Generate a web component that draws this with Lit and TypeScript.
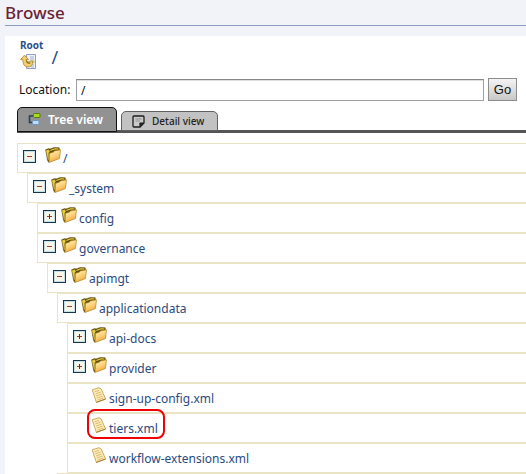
import { LitElement, html, css, svg, nothing, TemplateResult } from "lit";
import { customElement, state } from "lit/decorators.js";
import { classMap } from "lit/directives/class-map.js";

interface Entry {
  name: string;
  kind: "folder" | "file";
  open?: boolean;
  marked?: boolean;
  children?: Entry[];
}

const registry: Entry = {
  name: "/", kind: "folder", open: true, children: [
    { name: "_system", kind: "folder", open: true, children: [
      { name: "config", kind: "folder" },
      { name: "governance", kind: "folder", open: true, children: [
        { name: "apimgt", kind: "folder", open: true, children: [
          { name: "applicationdata", kind: "folder", open: true, children: [
            { name: "api-docs", kind: "folder" },
            { name: "provider", kind: "folder" },
            { name: "sign-up-config.xml", kind: "file" },
            { name: "tiers.xml", kind: "file", marked: true },
            { name: "workflow-extensions.xml", kind: "file" },
          ] },
        ] },
      ] },
    ] },
  ],
};

const folderIcon = html`<svg class="icon" viewBox="0 0 16 16" aria-hidden="true">
  <defs><linearGradient id="face" x1="0.2" y1="0" x2="0.6" y2="1">
    <stop offset="0" stop-color="#fff3b8"/><stop offset="0.5" stop-color="#fbd07a"/><stop offset="1" stop-color="#f0a030"/>
  </linearGradient></defs>
  <path d="M0.6 2.8 L3.6 1.6 L5 2 L9.4 0.4 L14.2 0.8 L14.6 4 L5 7 L3.8 15.4 L2.6 13.6 Z" fill="#5c4a12" stroke="#6e5814" stroke-width="0.6"/>
  <path d="M1 3.6 L3.8 2.6 L4.8 4.4 L3.6 6 L3.8 13.4 L2.9 12 Z" fill="#e9cf3c"/>
  <path d="M5.4 3.4 L10 1.7 L13.4 2" stroke="#f0d840" stroke-width="1.1" fill="none"/>
  <path d="M4.4 6.4 L8.2 5.2 L9.4 4 L15.5 2.8 L14.4 11.6 L4.2 15.4 Z" fill="url(#face)" stroke="#b5811c" stroke-width="0.7"/>
</svg>`;

const fileIcon = html`<svg class="icon" viewBox="0 0 16 16" aria-hidden="true">
  <path d="M1.2 2.8 L8 0.7 L10.2 2 L14.6 12 L5.4 15.4 Z" fill="#fdeebc" stroke="#c8a050" stroke-width="0.9"/>
  <path d="M5.4 15.4 L14.6 12" stroke="#a87c30" stroke-width="1"/>
  <path d="M3.6 4.8 L8.2 3.3 M4.3 6.9 L9.8 5.1 M5 9 L10.8 7.1 M5.7 11.1 L11.6 9.1 M6.4 13.1 L12.4 11" stroke="#d6ab62" stroke-width="0.8"/>
</svg>`;

const rootIcon = html`<svg class="icon" viewBox="0 0 16 16" aria-hidden="true">
  <path d="M6.5 0.5 H15.5 V14.5 H6.5 Z" fill="#eef1fa" stroke="#8f9cc4"/>
  <path d="M10 3 H14 M10 5 H14 M11 11 H14 M11 13 H14" stroke="#a4afd0" stroke-width="1"/>
  <path d="M11 6.5 H14.5 V9 H11 Z" fill="#b9cf7c"/>
  <path d="M4.5 1.2 L8.6 5.6 H6.2 C6.2 7.2 6.8 8.2 8.2 8 C9.6 7.8 10.2 6.6 12.6 6.9 C13.4 10.2 11.4 12.9 8 12.9 C4.6 12.9 2.7 10.3 2.9 5.6 H0.5 Z" fill="#f0cf6e" stroke="#b48c34" stroke-width="0.9"/>
  <path d="M6.6 6.6 C6.6 8.6 8 9.4 10.4 9" stroke="#7c5a1c" stroke-width="1.1" fill="none"/>
</svg>`;

const treeIcon = html`<svg class="tab-icon" viewBox="0 0 13 13" aria-hidden="true">
  <path d="M5 3 H1.5 V9.5 H4" fill="none" stroke="#2c4250" stroke-width="1.6"/>
  <rect x="5.5" y="0.5" width="6.5" height="4" rx="1" fill="#a8dc1c" stroke="#4e7d0c"/>
  <rect x="4.5" y="7.5" width="6.5" height="4" rx="1.2" fill="#c0dcfa" stroke="#6b96c4"/>
</svg>`;

const detailIcon = html`<svg class="tab-icon" viewBox="0 0 13 13" aria-hidden="true">
  <path d="M2 1 H11 Q12 1 12 2 V8 L8 12 H2 Q1 12 1 11 V2 Q1 1 2 1 Z" fill="#c9c9c9" stroke="#1c1c1c" stroke-width="1.3"/>
  <path d="M12 7.4 L7.4 12 V8.4 Q7.4 7.4 8.4 7.4 Z" fill="#1c1c1c"/>
  <path d="M3.5 4 H9.5 M3.5 6 H8" stroke="#909090"/>
</svg>`;

@customElement("registry-tree")
export class RegistryTree extends LitElement {
  static styles = css`
    :host { display: block; }
    ul { list-style: none; margin: 0; padding: 0; }
    ul ul { margin-left: 10px; }
    .row {
      display: flex;
      align-items: flex-start;
      box-sizing: border-box;
      height: 30px;
      padding: 3px 0 0 5px;
      border: 1px solid #e8e4c4;
      border-right: 0;
      white-space: nowrap;
    }
    .toggle, .spacer { flex: none; width: 13px; height: 13px; margin: 3px 5px 0 0; }
    .top .toggle { margin-right: 9px; }
    .toggle {
      display: block;
      padding: 0;
      border: 0;
      background: none;
      cursor: pointer;
    }
    .toggle svg { display: block; width: 13px; height: 13px; }
    .entry {
      position: relative;
      display: flex;
      color: #2b4a80;
      text-decoration: none;
      line-height: 16px;
    }
    .icon { flex: none; width: 16px; height: 16px; margin-right: 2px; }
    .name { padding-top: 4px; }
    .marked::after {
      content: "";
      position: absolute;
      inset: -8px -7px -2px -4px;
      border: 2px solid #f00000;
      border-radius: 8px;
      pointer-events: none;
    }
    .next { border-top: 1px solid #e8e4c4; }
  `;

  @state() private root = registry;

  private flip(entry: Entry) {
    entry.open = !entry.open;
    this.requestUpdate();
  }

  private toggle(entry: Entry) {
    return html`<button class="toggle" type="button"
      aria-label="${entry.open ? "Collapse" : "Expand"} ${entry.name}"
      aria-expanded=${entry.open ? "true" : "false"}
      @click=${() => this.flip(entry)}>
      <svg viewBox="0 0 13 13" aria-hidden="true">
        <rect x="0.5" y="0.5" width="12" height="12" fill="#f8f4e6" stroke="#17374f"/>
        <rect x="1.5" y="1.5" width="10" height="10" fill="none" stroke="#c5dfe6"/>
        <path d="M4 6.5 H9" stroke="#a03c34"/>
        ${entry.open ? nothing : svg`<path d="M6.5 4 V9" stroke="#8a1c20"/>`}
      </svg>
    </button>`;
  }

  private item(entry: Entry, depth: number): TemplateResult {
    const folder = entry.kind === "folder";
    return html`<li>
      <div class=${classMap({ row: true, top: depth === 0 })}>
        ${folder ? this.toggle(entry) : html`<span class="spacer"></span>`}
        <a class=${classMap({ entry: true, marked: !!entry.marked })} href="#">
          ${folder ? folderIcon : fileIcon}<span class="name">${entry.name}</span>
        </a>
      </div>
      ${entry.open && entry.children
        ? html`<ul>
            ${entry.children.map((c) => this.item(c, depth + 1))}
            ${entry.name === "apimgt" ? html`<li class="next"></li>` : nothing}
          </ul>`
        : nothing}
    </li>`;
  }

  render() {
    return html`<ul>${this.item(this.root, 0)}</ul>`;
  }
}

@customElement("app-root")
export class AppRoot extends LitElement {
  static styles = css`
    :host {
      display: block;
      box-sizing: border-box;
      min-height: 100vh;
      padding-left: 5px;
      background: #f2f3f9;
      color: #111;
      font: 12px/16px "Noto Sans", "Open Sans", sans-serif;
      overflow: hidden;
    }
    h1 {
      margin: 0 0 10px;
      padding-top: 1px;
      border-bottom: 1px solid #8a9dc2;
      color: #6b2434;
      font-size: 17px;
      font-weight: 500;
      line-height: 24px;
    }
    .panel { padding: 2px 0 0 12px; background: #fff; }
    .crumbs { display: flex; gap: 8px; padding-left: 3px; height: 40px; }
    .crumbs a { color: #2b4f8c; text-decoration: none; }
    .root { display: flex; flex-direction: column; gap: 2px; font-size: 10px; font-weight: 700; line-height: 14px; }
    .slash { padding-top: 10px; font-size: 18px; line-height: 18px; }
    .icon { width: 16px; height: 16px; }
    .location { display: flex; align-items: flex-end; gap: 4px; padding: 0 9px 0 2px; }
    .location label { min-width: 53px; line-height: 23px; }
    .location input {
      flex: 1;
      min-width: 0;
      box-sizing: border-box;
      height: 22px;
      padding: 0 4px;
      border: 1px solid #a0a0a0;
      border-top-color: #888;
      background: #fff;
      box-shadow: inset 0 1px 1px #ddd;
      color: #111;
      font: inherit;
    }
    .location button {
      box-sizing: border-box;
      width: 29px;
      height: 23px;
      padding: 0;
      border: 1px solid #8c8c8c;
      background: linear-gradient(#f4f4f4, #c8c8c8);
      color: #111;
      font: 13px "Liberation Sans", sans-serif;
    }
    .tabs {
      display: flex;
      align-items: flex-end;
      gap: 4px;
      margin: 6px 0 10px;
      background: linear-gradient(#555, #555) bottom / 100% 3px no-repeat;
    }
    .tab {
      display: flex;
      align-items: center;
      box-sizing: border-box;
      padding: 0 13px 0 10px;
      border: 1px solid #606060;
      border-radius: 5px 5px 0 0;
      background: #c2c2c2;
      color: #222;
      font: 500 10px/16px "Noto Sans", "Open Sans", sans-serif;
      height: 20px;
      margin-bottom: 2px;
      gap: 7px;
      white-space: nowrap;
    }
    .tab.active {
      height: 25px;
      margin-bottom: 1px;
      border-color: #111;
      background: #929292;
      color: #fff;
      font-size: 12px;
      font-weight: 600;
    }
    .tab-icon { flex: none; width: 13px; height: 13px; }
  `;

  render() {
    return html`
      <h1>Browse</h1>
      <main class="panel">
        <nav class="crumbs" aria-label="Path">
          <a class="root" href="#">Root ${rootIcon}</a>
          <a class="slash" href="#">/</a>
        </nav>
        <form class="location" @submit=${(e: Event) => e.preventDefault()}>
          <label for="location">Location:</label>
          <input id="location" type="text" value="/" />
          <button type="submit">Go</button>
        </form>
        <div class="tabs" role="tablist">
          <button class="tab active" role="tab" aria-selected="true">${treeIcon}Tree view</button>
          <button class="tab" role="tab" aria-selected="false">${detailIcon}Detail view</button>
        </div>
        <registry-tree></registry-tree>
      </main>
    `;
  }
}
